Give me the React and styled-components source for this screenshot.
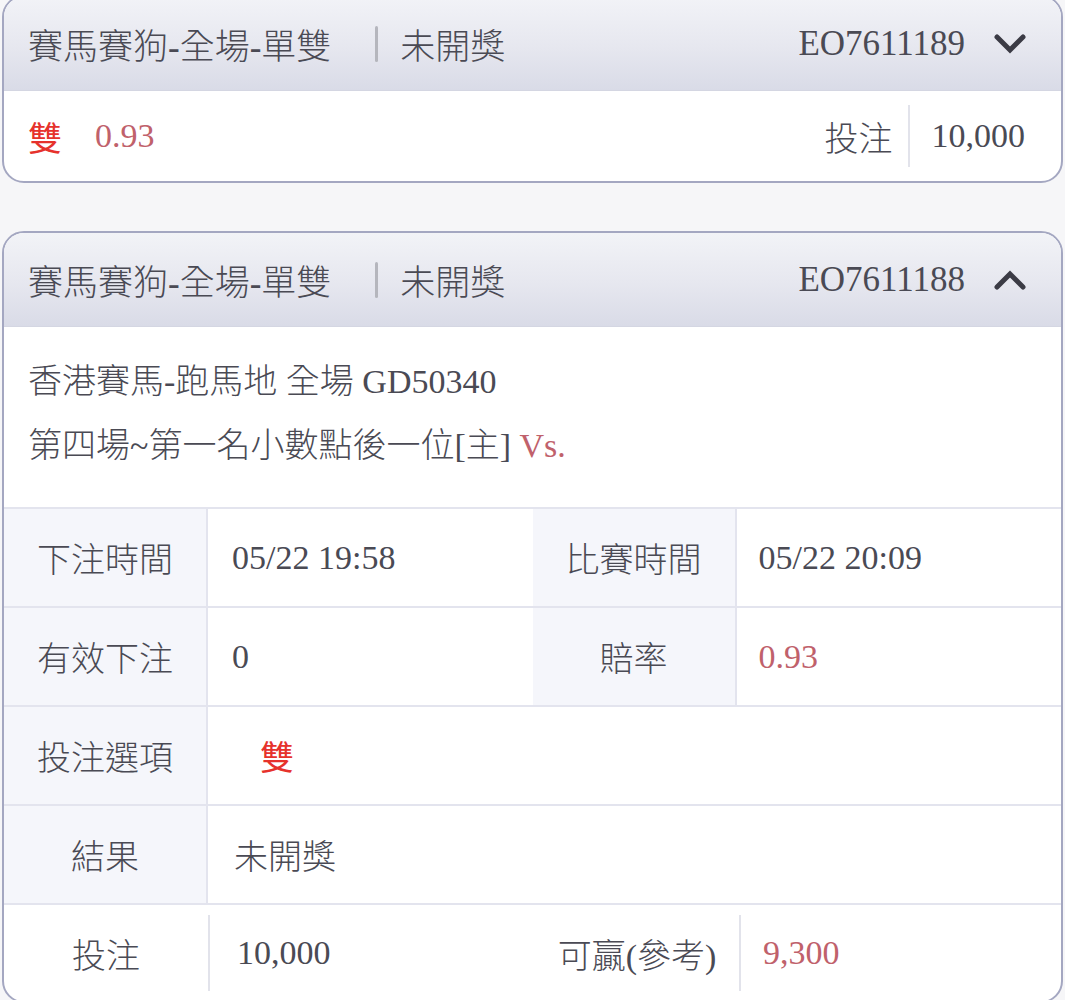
import styled, { createGlobalStyle } from "styled-components";

const GlobalStyle = createGlobalStyle`
  body {
    margin: 0;
    background: #f6f6f8;
    font-family: "Liberation Serif", "Noto Sans CJK TC", serif;
    font-weight: 300;
    color: #4a4a54;
  }
`;

const Page = styled.div`
  display: flex;
  flex-direction: column;
  gap: 48px;
  margin-top: -5px;
  padding: 0 2px;
`;

const Card = styled.div`
  border: 2px solid #a4a7c1;
  border-radius: 22px;
  background: #fff;
  overflow: hidden;
`;

const Header = styled.div`
  display: flex;
  align-items: center;
  height: 93px;
  padding: 0 34px 0 24px;
  background: linear-gradient(180deg, #f2f3f7 0%, #e6e7ef 55%, #d9dbe7 100%);
  border-bottom: 1px solid #d4d6e2;
  font-size: 35px;
`;

const Title = styled.span`
  white-space: nowrap;
`;

const Divider = styled.span`
  width: 3px;
  height: 36px;
  margin: 0 22px 0 44px;
  background: #b5b6bd;
  border-radius: 2px;
`;

const Spacer = styled.span`
  flex: 1;
`;

const Code = styled.span`
  margin-right: 28px;
`;

const Chevron = ({ up }) => (
  <svg width="34" height="22" viewBox="0 0 34 22">
    <polyline
      points={up ? "4,18 17,5 30,18" : "4,4 17,17 30,4"}
      fill="none"
      stroke="#3b3b45"
      strokeWidth="5"
      strokeLinecap="round"
      strokeLinejoin="miter"
    />
  </svg>
);

const SummaryRow = styled.div`
  display: flex;
  align-items: center;
  height: 90px;
  padding: 0 36px 0 24px;
  font-size: 34px;
`;

const Pick = styled.span`
  color: #e6322c;
  font-weight: 400;
`;

const Odds = styled.span`
  color: #c0616b;
  margin-left: ${({ gap }) => gap || 0}px;
`;

const VSep = styled.span`
  width: 2px;
  height: ${({ h }) => h || 62}px;
  background: #e2e3eb;
  margin: ${({ m }) => m || "0 22px 0 15px"};
`;

const Desc = styled.div`
  padding: 23px 24px 29px;
  font-size: 34px;
  line-height: 64px;
`;

const Red = styled.span`
  color: #c0616b;
`;

const Row = styled.div`
  display: grid;
  grid-template-columns: 204px 1fr 204px 1fr;
  border-top: 2px solid #e3e4ee;
  height: 97px;
  font-size: 34px;
`;

const Label = styled.div`
  display: flex;
  align-items: center;
  justify-content: center;
  background: #f5f6fb;
  border-right: 2px solid #e3e4ee;
`;

const Value = styled.div`
  display: flex;
  align-items: center;
  padding-left: ${({ pl }) => pl || 24}px;
  grid-column: span ${({ span }) => span || 1};
  color: ${({ tone }) => tone || "inherit"};
`;

const FootRow = styled.div`
  display: flex;
  align-items: center;
  border-top: 2px solid #e3e4ee;
  height: 96px;
  font-size: 34px;
`;

const FootLabel = styled.div`
  width: 204px;
  text-align: center;
`;

const FootValue = styled.div`
  flex: 1;
  padding-left: ${({ pl }) => pl || 24}px;
  color: ${({ tone }) => tone || "inherit"};
`;

export default function App() {
  return (
    <>
      <GlobalStyle />
      <Page>
        <Card>
          <Header>
            <Title>賽馬賽狗-全場-單雙</Title>
            <Divider />
            <Title>未開獎</Title>
            <Spacer />
            <Code>EO7611189</Code>
            <Chevron />
          </Header>
          <SummaryRow>
            <Pick>雙</Pick>
            <Odds gap={33}>0.93</Odds>
            <Spacer />
            <span>投注</span>
            <VSep />
            <span>10,000</span>
          </SummaryRow>
        </Card>

        <Card>
          <Header>
            <Title>賽馬賽狗-全場-單雙</Title>
            <Divider />
            <Title>未開獎</Title>
            <Spacer />
            <Code>EO7611188</Code>
            <Chevron up />
          </Header>
          <Desc>
            <div>香港賽馬-跑馬地 全場 GD50340</div>
            <div>
              第四場~第一名小數點後一位[主] <Red>Vs.</Red>
            </div>
          </Desc>
          <Row>
            <Label>下注時間</Label>
            <Value>05/22 19:58</Value>
            <Label>比賽時間</Label>
            <Value pl={22}>05/22 20:09</Value>
          </Row>
          <Row>
            <Label>有效下注</Label>
            <Value>0</Value>
            <Label>賠率</Label>
            <Value pl={22} tone="#c0616b">0.93</Value>
          </Row>
          <Row>
            <Label>投注選項</Label>
            <Value span={3} pl={52}>
              <Pick>雙</Pick>
            </Value>
          </Row>
          <Row>
            <Label>結果</Label>
            <Value span={3} pl={26}>未開獎</Value>
          </Row>
          <FootRow>
            <FootLabel>投注</FootLabel>
            <VSep h={76} m="0" />
            <FootValue pl={27}>10,000</FootValue>
            <FootLabel>可贏(參考)</FootLabel>
            <VSep h={76} m="0" />
            <FootValue pl={22} tone="#c0616b">9,300</FootValue>
          </FootRow>
        </Card>
      </Page>
    </>
  );
}
